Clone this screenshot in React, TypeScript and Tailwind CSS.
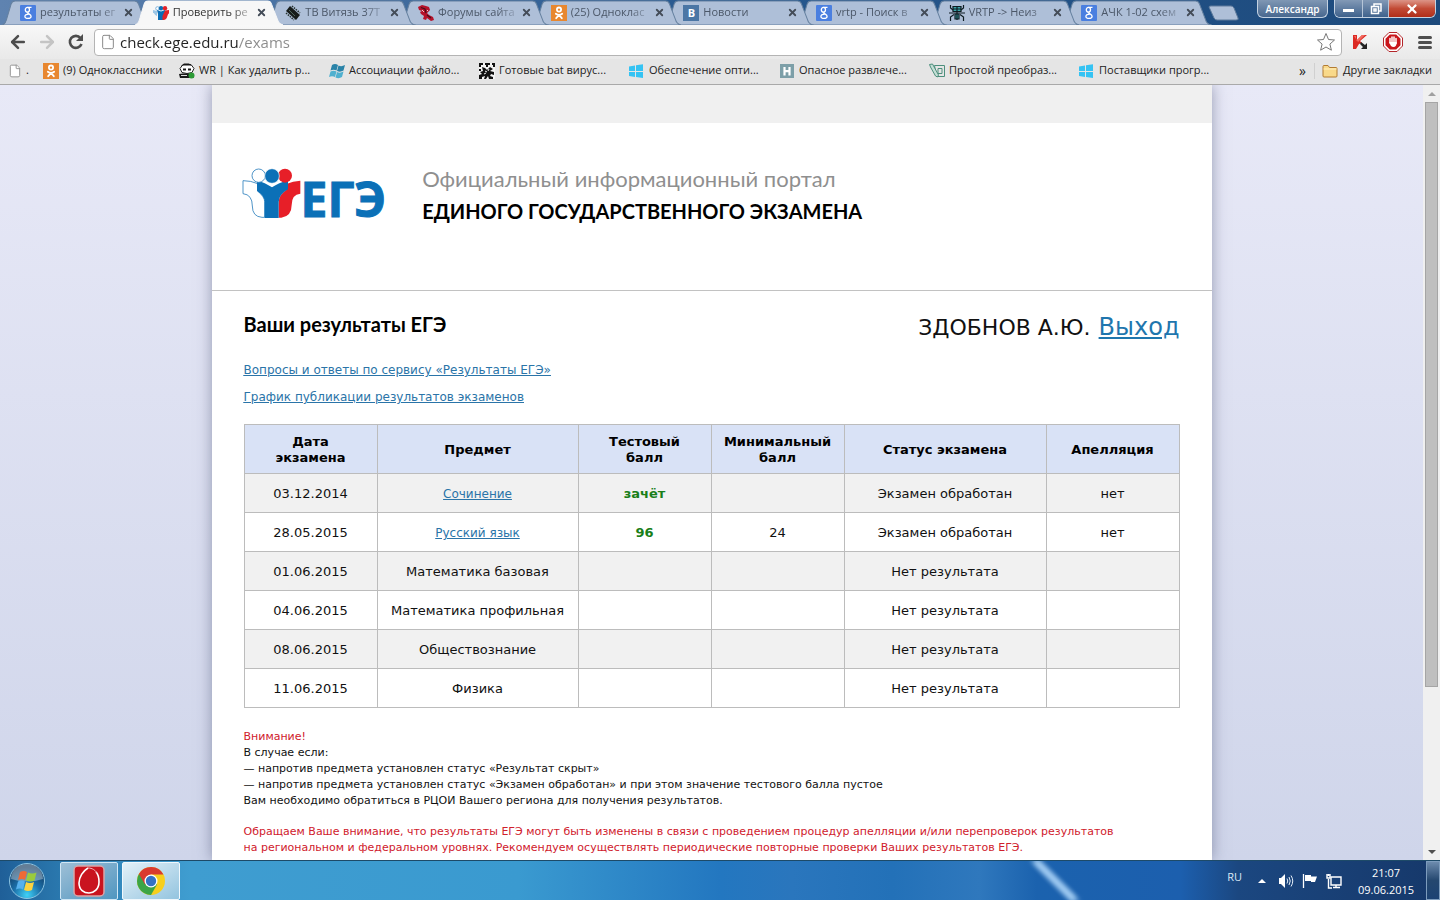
import type { ReactNode } from 'react';
import { ArrowLeft, ArrowRight, File, Star, X } from 'lucide-react';

const GoogleIcon = () => (
  <svg viewBox="0 0 16 16" className="size-4 shrink-0">
    <rect width="16" height="16" rx="1" fill="#4a7fe0" />
    <g fill="none" stroke="#fff" strokeWidth="1.3">
      <ellipse cx="7.4" cy="4.8" rx="2.1" ry="2.4" />
      <path d="M11.500 2.300H7.500M8.500 7.200c-2.600 1.200 2.600 1.800 2.600 4 0 2.900-6.200 2.900-6.200.4 0-1.700 2-2.400 4-2.400" />
    </g>
  </svg>
);

const OkIcon = () => (
  <svg viewBox="0 0 16 16" className="size-4 shrink-0">
    <rect width="16" height="16" fill="#e8872f" />
    <g fill="none" stroke="#fff" strokeWidth="1.8" strokeLinecap="round">
      <circle cx="8" cy="4.600" r="2.100" />
      <path d="M4.800 8.700c2 1.500 4.400 1.500 6.400 0M8 10l-2.800 3.200M8 10l2.800 3.200" />
    </g>
  </svg>
);

const PeopleIcon = () => (
  <svg viewBox="0 0 16 16" className="size-4 shrink-0">
    <circle cx="4.500" cy="3.500" r="1.800" fill="#fff" stroke="#7fb3dc" />
    <circle cx="8" cy="3.200" r="2.200" fill="#0b6db5" />
    <circle cx="12" cy="3.200" r="2.200" fill="#e42228" />
    <path d="M0 5l4 1v5C1 10 2 8 0 8z" fill="#9cc6e6" />
    <path d="M4 5l4 1.500L12 5v4l-2 2v4H5V9z" fill="#0b6db5" />
    <path d="M12 5.500L16 5v3.500c-2 0-1 6-5 6.500H9.500v-4z" fill="#e42228" />
  </svg>
);

const ChipIcon = () => (
  <svg viewBox="0 0 16 16" className="size-4 shrink-0">
    <path d="M5 1l10 9-4 5L1 6z" fill="#171c1a" />
    <path d="M1 8l8 7M7 1l8 7" stroke="#26322e" strokeWidth="1.500" strokeDasharray="1.500 1" />
    <path d="M4 5l6 6" stroke="#4d6259" />
  </svg>
);

const RedBirdIcon = () => (
  <svg viewBox="0 0 16 16" className="size-4 shrink-0">
    <path d="M0 2l4-2 4 1 3 1 1 3-3 3 2 2 4 2 1 3-3 1-4-3-1 2-3-1 1-3-3-2-1-2 2-1-3-1z" fill="#b5122b" />
    <path d="M3 2.500l4 1.500 1 4M9 10l4 3" stroke="#45101c" strokeWidth="1.200" fill="none" />
    <path d="M4 5l2 2M9 5l1 1" stroke="#f3c5c9" />
  </svg>
);

const VkIcon = () => (
  <span className="flex size-4 shrink-0 items-center justify-center bg-[#4b76a5] font-['Open_Sans',sans-serif] text-[11px] font-bold leading-none text-white">
    В
  </span>
);

const BugIcon = () => (
  <svg viewBox="0 0 16 16" className="size-4 shrink-0" fill="none" stroke="#0e1c22" strokeWidth="1.200">
    <path d="M4 1.500h8v5H4z" fill="#3aa5a8" />
    <path d="M6 9h4v5H6z" fill="#3aa5a8" />
    <path d="M1.500 0v3L4 5M14.500 0v3L12 5M0 8h16M1.500 16v-4L5 9.500M14.500 16v-4L11 9.500M8 1v14M4 4h8" />
  </svg>
);

const PandaIcon = () => (
  <svg viewBox="0 0 16 16" className="size-4 shrink-0">
    <path d="M1 5.500l3-4h8l3 4-2 4-5 1-5-1z" fill="#fff" stroke="#222" />
    <path d="M2 3l3-2.500h5L13 3l-2-.5H5zM4 5.500h3v2H4zM9 5.500h3v2H9zM0 11l4-.5h8l3 4.500H1z" fill="#1a1a1a" />
    <path d="M2 12.500h6" stroke="#ddd" />
    <circle cx="12.500" cy="12.500" r="3" fill="#2b9b35" />
  </svg>
);

const WinFlagIcon = () => (
  <svg viewBox="0 0 16 16" className="size-4 shrink-0">
    <path d="M3 2q3-2 6 0L7.500 7.500q-3-1.500-6 0zM9.500 2.500q3 1.500 6.500-.5l-1.500 5.500q-3 2-6.500.5z" fill="#2a83a8" />
    <path d="M1.500 8.500q3-1.500 6 0L6 14q-3-1.500-6 0zM8 9q3 1.500 6.500-.5L13 14q-3 2-6.500.5z" fill="#4fb0cf" />
  </svg>
);

const QrIcon = () => (
  <svg viewBox="0 0 16 16" className="size-4 shrink-0">
    <rect width="16" height="16" fill="#f4f4f4" />
    <path
      d="M0 0h4v2H2v2H0zM6 0h5v2H9v2H7V2H6zM13 0h3v4h-2V2h-1zM3 4l3 1 2 2 3-3 3 2-3 2 4 1v3l-3-1-1 2 3 1v2h-4l-1-3-2 3H5l1-3-3 1v2H0v-4l3-1-2-2 3-1zM0 6h2v2H0z"
      fill="#111"
    />
    <path d="M6 8l2 1M10 6l-1 2M5 11l2-1" stroke="#f4f4f4" />
  </svg>
);

const WindowsIcon = () => (
  <svg viewBox="0 0 16 16" className="size-4 shrink-0">
    <path d="M0 3.500l6-1V8H0zM7 2.300L14 1.300V8H7zM0 9h6v5l-6-1zM7 9h7v6l-7-1z" fill="#35c3f3" />
  </svg>
);

const HIcon = () => (
  <svg viewBox="0 0 16 16" className="size-4 shrink-0">
    <rect x="1" y="1" width="14" height="14" fill="#7d9fa8" />
    <path d="M5.500 4v8.500M10.500 4v8.500M5.500 8.200h5" stroke="#fff" strokeWidth="2.200" />
  </svg>
);

const NoteIcon = () => (
  <svg viewBox="0 0 16 16" className="size-4 shrink-0" fill="none" stroke="#4c8f7c">
    <path d="M5.500 2.500h10v11H7.500zM9 5.500h4v5H9z" />
    <path d="M.5 1.500l3-.5 6 11-1 2-2-1-5-9z" fill="#c4ded5" />
  </svg>
);

const FolderIcon = () => (
  <svg viewBox="0 0 16 16" className="size-4 shrink-0">
    <path d="M1 3.500q0-1 1-1h4l1.500 2H14q1 0 1 1V13q0 1-1 1H2q-1 0-1-1z" fill="#f9d98a" stroke="#b27b33" />
    <path d="M1.500 6h13" stroke="#fff0bd" />
  </svg>
);

const tabs = [
  { title: 'результаты ег', icon: <GoogleIcon /> },
  { title: 'Проверить ре', icon: <PeopleIcon />, active: true },
  { title: 'ТВ Витязь 37Т', icon: <ChipIcon /> },
  { title: 'Форумы сайта', icon: <RedBirdIcon /> },
  { title: '(25) Одноклас', icon: <OkIcon /> },
  { title: 'Новости', icon: <VkIcon /> },
  { title: 'vrtp - Поиск в', icon: <GoogleIcon /> },
  { title: 'VRTP -> Неиз', icon: <BugIcon /> },
  { title: 'АЧК 1-02 схем', icon: <GoogleIcon /> },
];

const bookmarks = [
  { title: 'WR | Как удалить р...', icon: <PandaIcon /> },
  { title: 'Ассоциации файло...', icon: <WinFlagIcon /> },
  { title: 'Готовые bat вирус...', icon: <QrIcon /> },
  { title: 'Обеспечение опти...', icon: <WindowsIcon /> },
  { title: 'Опасное развлече...', icon: <HIcon /> },
  { title: 'Простой преобраз...', icon: <NoteIcon /> },
  { title: 'Поставщики прогр...', icon: <WindowsIcon /> },
];

const exams = [
  { date: '03.12.2014', subject: 'Сочинение', link: true, score: 'зачёт', min: '', status: 'Экзамен обработан', appeal: 'нет' },
  { date: '28.05.2015', subject: 'Русский язык', link: true, score: '96', min: '24', status: 'Экзамен обработан', appeal: 'нет' },
  { date: '01.06.2015', subject: 'Математика базовая', score: '', min: '', status: 'Нет результата', appeal: '' },
  { date: '04.06.2015', subject: 'Математика профильная', score: '', min: '', status: 'Нет результата', appeal: '' },
  { date: '08.06.2015', subject: 'Обществознание', score: '', min: '', status: 'Нет результата', appeal: '' },
  { date: '11.06.2015', subject: 'Физика', score: '', min: '', status: 'Нет результата', appeal: '' },
];

function Tab({ title, icon, active, order }: { title: string; icon: ReactNode; active?: boolean; order: number }) {
  return (
    <div className="relative flex h-[25px] items-center pl-[10px]" style={{ zIndex: active ? 20 : order }}>
      {/* slanted tab outline, overlaps the neighbours */}
      <svg viewBox="0 0 147 24" preserveAspectRatio="none" className="absolute inset-y-0 -left-2 h-full w-[calc(100%+16px)]">
        <path
          d="M0 24C4 23 4 20 5 17L9 4Q10 1 13 1H131Q134 1 135 4L141 19Q142 23 147 24Z"
          fill={active ? '#f7f7f7' : '#aebfd8'}
          stroke={active ? '#f7f7f7' : '#65809f'}
        />
      </svg>
      <button className="relative flex min-w-0 flex-1 items-center gap-1 text-left">
        {icon}
        <span
          className={`flex-1 whitespace-nowrap [mask-image:linear-gradient(to_right,#000_75%,#0003)] ${
            active ? 'text-[#333]' : 'text-[#4b5768]'
          }`}
        >
          {title}
        </span>
      </button>
      <button aria-label="Закрыть вкладку" className="relative mr-1 flex size-5 shrink-0 items-center justify-center text-[#444c58]">
        <X className="size-[11px]" strokeWidth={4} />
      </button>
    </div>
  );
}

function TabStrip() {
  return (
    <div className="flex h-[25px] items-start bg-linear-to-r from-[#5f83b0] via-[#26588f] to-[#1d4a7c] pl-[10px] font-['Open_Sans','Noto_Sans',sans-serif] text-[11px]">
      <div className="grid min-w-0 flex-1 grid-cols-9">
        {tabs.map((tab, i) => (
          <Tab key={tab.title} {...tab} order={tabs.length - i} />
        ))}
      </div>
      <div className="flex w-[236px] shrink-0 items-start justify-between pl-1">
        <button aria-label="Новая вкладка" className="mt-[5px]">
          <svg viewBox="0 0 32 16" className="h-4 w-8">
            <path d="M1 2Q1 1 3 1H23Q25 1 26 3L30 13Q31 15 28 15H9Q7 15 6 13Z" fill="#aebfd8" stroke="#5e7b9c" />
          </svg>
        </button>
        <div className="flex gap-[6px] pr-1">
          <button className="h-[18px] w-[71px] rounded-b-md border border-t-0 border-[#c4d2e2] bg-linear-to-b from-[#7f97b4] to-[#48688f] text-[10px] font-semibold leading-4 text-white">
            Александр
          </button>
          <div className="flex h-[18px] overflow-hidden rounded-b-md border border-t-0 border-[#c4d2e2]">
            <button aria-label="Свернуть" className="flex w-7 items-end justify-center border-r border-[#b5c5d8] bg-linear-to-b from-[#8299b6] to-[#3f628c] pb-[5px]">
              <span className="h-[3px] w-[11px] bg-white" />
            </button>
            <button aria-label="Восстановить" className="flex w-[26px] items-center justify-center border-r border-[#b5c5d8] bg-linear-to-b from-[#8299b6] to-[#3f628c]">
              <svg viewBox="0 0 12 12" className="size-3" fill="none" stroke="#fff" strokeWidth="1.500">
                <path d="M4 3V1h7v7H9" />
                <path d="M1.500 3.500h7v7h-7zM4 6h2v2H4z" />
              </svg>
            </button>
            <button aria-label="Закрыть" className="flex w-[46px] items-center justify-center bg-linear-to-b from-[#dc9487] via-[#c24a35] to-[#b02d18] text-white">
              <X className="size-[14px]" strokeWidth={4} />
            </button>
          </div>
        </div>
      </div>
    </div>
  );
}

function Toolbar() {
  return (
    <div className="flex h-[34px] items-center bg-linear-to-b from-[#f8f8f8] to-[#e9e9e9] pl-2 pr-2">
      <div className="flex items-center gap-[9px] pr-2 text-[#4d4d4d]">
        <button aria-label="Назад">
          <ArrowLeft className="size-5" strokeWidth={3} />
        </button>
        <button aria-label="Вперёд" className="text-[#c4c4c4]">
          <ArrowRight className="size-5" strokeWidth={3} />
        </button>
        <button aria-label="Обновить">
          <svg viewBox="0 0 20 20" className="size-5">
            <path d="M14.500 6A6 6 0 1 0 15.500 12" fill="none" stroke="currentColor" strokeWidth="2.600" />
            <path d="M17 2v7h-7z" fill="currentColor" />
          </svg>
        </button>
      </div>
      <div className="flex h-[27px] flex-1 items-center rounded-sm border border-[#b4b4b4] bg-white px-[5px]">
        <File className="size-4 text-[#8a8a8a]" strokeWidth={1.5} />
        <input
          aria-label="Адрес"
          defaultValue="check.ege.edu.ru/exams"
          className="ml-1 min-w-0 flex-1 bg-[linear-gradient(to_right,#222_118px,#8a8a8a_118px)] bg-clip-text font-['Open_Sans','Noto_Sans',sans-serif] text-[15px] leading-6 text-transparent outline-none"
        />
        <button aria-label="Добавить в закладки" className="pl-1">
          <svg viewBox="0 0 20 20" className="size-5">
            <path
              d="M10 1.500l2.500 6 6 .5-4.600 4.100 1.500 6.100L10 15l-5.400 3.200 1.500-6.100L1.500 8l6-.5z"
              fill="#fff"
              stroke="#777"
              strokeLinejoin="round"
            />
          </svg>
        </button>
      </div>
      <div className="flex items-center gap-[15px] pl-[10px]">
        <button aria-label="Антивирус">
          <svg viewBox="0 0 16 16" className="size-4">
            <path d="M1 1h4v5l5-5h5L8 7l2 2-3 1-3 5H1z" fill="#dc2a24" />
            <path d="M2 2h2v5l6-6h3L6 8z" fill="#f26a5e" />
            <path d="M9 8l4 3 2-2v6H9l2-2-3-3z" fill="#222" />
          </svg>
        </button>
        <button aria-label="Блокировка рекламы">
          <svg viewBox="0 0 20 20" className="size-5">
            <path d="M6 .5h8L19.500 6v8L14 19.500H6L.5 14V6z" fill="#fff" stroke="#b3262a" />
            <path d="M6.800 2.500h6.400l4.300 4.300v6.400l-4.300 4.300H6.800l-4.300-4.300V6.800z" fill="#c9151b" />
            <path d="M7 6.500v4.500M9 5v6M11 5v6M13 6.500v5" stroke="#fff" strokeWidth="1.500" strokeLinecap="round" />
            <path d="M6.300 10h7.400q0 5-3.200 5T6.300 10z" fill="#fff" />
          </svg>
        </button>
        <button aria-label="Меню" className="flex w-[14px] flex-col gap-[2px]">
          <span className="h-[3px] rounded-xs bg-[#4f4f4f]" />
          <span className="h-[3px] rounded-xs bg-[#4f4f4f]" />
          <span className="h-[3px] rounded-xs bg-[#4f4f4f]" />
        </button>
      </div>
    </div>
  );
}

function BookmarksBar() {
  return (
    <nav className="flex h-[26px] items-center whitespace-nowrap border-b border-[#a9a9a9] bg-[#e5e5e5] pb-[2px] pl-2 pr-2 font-['Open_Sans','Noto_Sans',sans-serif] text-[11px] text-[#222]">
      <a href="#" className="flex w-[35px] shrink-0 items-center gap-1">
        <File className="size-[14px] fill-white text-[#8a8a8a]" strokeWidth={1.5} />.
      </a>
      <a href="#" className="flex w-[136px] shrink-0 items-center gap-1">
        <OkIcon />
        (9) Одноклассники
      </a>
      <div className="flex min-w-0 flex-1 overflow-hidden">
        {bookmarks.map((b) => (
          <a key={b.title} href="#" className="flex w-[150px] shrink-0 items-center gap-1">
            {b.icon}
            {b.title}
          </a>
        ))}
      </div>
      <button aria-label="Ещё закладки" className="border-r border-[#d0d0d0] pr-2 text-sm leading-4">
        »
      </button>
      <a href="#" className="flex items-center gap-[5px] pl-[7px]">
        <FolderIcon />
        Другие закладки
      </a>
    </nav>
  );
}

function Logo() {
  return (
    <a href="#" aria-label="ЕГЭ" className="flex items-start">
      <svg viewBox="94 80 177 156" className="h-[52px] w-[59px]">
        <path
          d="M97 121q24 0 44 9v22q21 18 21 32v47h-8q-29-2-29-34 0-34-28-37z"
          fill="#fff"
          stroke="#2d7fbd"
          strokeWidth="2.500"
        />
        <path d="M269 121q-22 1-42 10v18q-23 14-23 36v47h8q31-4 31-38 0-32 26-34z" fill="#e71f28" />
        <path d="M139 121q24 5 45 20 20-15 48-20v26q-28 16-28 38v48h-42v-49q0-17-23-32z" fill="#0b70b7" />
        <circle cx="144" cy="106" r="20" fill="#fff" stroke="#2d7fbd" strokeWidth="2.500" />
        <circle cx="223" cy="106" r="21" fill="#e71f28" />
        <circle cx="184" cy="107" r="22" fill="#0b70b7" stroke="#fff" strokeWidth="2" />
      </svg>
      <span className="pt-[6px] font-['Open_Sans',sans-serif] text-5xl font-bold leading-[52px] text-[#0b70b7] [-webkit-text-stroke:1px_#0b70b7]">
        ЕГЭ
      </span>
    </a>
  );
}

function Results() {
  return (
    <div className="px-8 pt-5 font-['DejaVu_Sans',sans-serif] text-[#111]">
      <div className="flex items-start justify-between">
        <h1 className="font-['Lato','Open_Sans',sans-serif] text-xl font-bold leading-[26px] text-black">Ваши результаты ЕГЭ</h1>
        <div className="flex items-baseline gap-2 text-[22px] leading-8">
          <span>ЗДОБНОВ А.Ю.</span>
          <a href="#" className="text-2xl leading-8 text-[#1f76ae] underline">
            Выход
          </a>
        </div>
      </div>
      <div className="flex flex-col items-start gap-[11px] pt-[18px] text-xs text-[#2a74a8] underline">
        <a href="#">Вопросы и ответы по сервису «Результаты ЕГЭ»</a>
        <a href="#">График публикации результатов экзаменов</a>
      </div>

      <table className="mt-[19px] w-full table-fixed border-collapse text-center text-[13px] leading-4 [&_td]:border [&_td]:border-[#bcbcbc] [&_td]:pt-[2px] [&_th]:border [&_th]:border-[#bcbcbc] [&_th]:pt-[2px]">
        <colgroup>
          <col className="w-[133px]" />
          <col className="w-[201px]" />
          <col className="w-[133px]" />
          <col className="w-[133px]" />
          <col className="w-[202px]" />
          <col className="w-[133px]" />
        </colgroup>
        <thead>
          <tr className="h-[49px] bg-[#d9e2f6] text-black">
            <th className="px-4">Дата экзамена</th>
            <th>Предмет</th>
            <th className="px-4">Тестовый балл</th>
            <th>Минимальный балл</th>
            <th>Статус экзамена</th>
            <th>Апелляция</th>
          </tr>
        </thead>
        <tbody>
          {exams.map((exam) => (
            <tr key={exam.date} className="h-[39px] odd:bg-[#f1f1f1]">
              <td>{exam.date}</td>
              <td>
                {exam.link ? (
                  <a href="#" className="text-xs leading-4 text-[#2a74a8] underline">
                    {exam.subject}
                  </a>
                ) : (
                  exam.subject
                )}
              </td>
              <td className="font-bold text-[#1a7f1a]">{exam.score}</td>
              <td>{exam.min}</td>
              <td>{exam.status}</td>
              <td>{exam.appeal}</td>
            </tr>
          ))}
        </tbody>
      </table>

      <div className="pt-[21px] text-[11px] leading-4">
        <p className="text-[#d0202c]">Внимание!</p>
        <p>В случае если:</p>
        <p>— напротив предмета установлен статус «Результат скрыт»</p>
        <p>— напротив предмета установлен статус «Экзамен обработан» и при этом значение тестового балла пустое</p>
        <p>Вам необходимо обратиться в РЦОИ Вашего региона для получения результатов.</p>
        <p className="pt-[15px] text-[#d0202c]">
          Обращаем Ваше внимание, что результаты ЕГЭ могут быть изменены в связи с проведением процедур апелляции и/или перепроверок результатов
          <br />
          на региональном и федеральном уровнях. Рекомендуем осуществлять периодические повторные проверки Ваших результатов ЕГЭ.
        </p>
      </div>
    </div>
  );
}

function Scrollbar() {
  return (
    <div className="flex w-[17px] shrink-0 flex-col items-center bg-[#f0f0f0]">
      <span className="flex h-[17px] items-center">
        <svg viewBox="0 0 8 4" className="h-1 w-2">
          <path d="M0 4l4-4 4 4z" fill="#a0a0a0" />
        </svg>
      </span>
      <div className="w-full flex-1 px-[2px]">
        <div className="h-[79%] border border-[#a5a5a5] bg-[#bfbfbf]" />
      </div>
      <span className="flex h-[17px] items-center">
        <svg viewBox="0 0 8 4" className="h-1 w-2">
          <path d="M0 0l4 4 4-4z" fill="#505050" />
        </svg>
      </span>
    </div>
  );
}

function Taskbar() {
  return (
    <footer className="relative flex h-10 shrink-0 items-center justify-between overflow-hidden border-t border-[#1d4a68] bg-[linear-gradient(to_right,#1f5f98_0,#2a78ae_60px,#3f9dd0_190px,#3a9ad0_36%,#2377c0_50%,#2a76bd_55%,#2371b8_62%,#2f78bd_68%,#1b62ae_72%,#1c5fae_82%,#1b4780_86%,#16386a_100%)] font-['Open_Sans','Noto_Sans',sans-serif] text-[11px] text-white">
      {/* light streak of the desktop behind the glass */}
      <div className="absolute inset-y-0 left-[73%] w-2 rotate-[-45deg] scale-y-150 bg-[#9cc8f0] blur-[2px]" />
      <div className="relative flex h-full items-center gap-1 pl-2">
        <button aria-label="Пуск" className="mr-[10px]">
          <svg viewBox="0 0 38 38" className="size-[38px]">
            <defs>
              <radialGradient id="orb" cx="50%" cy="90%" r="80%">
                <stop offset="0" stopColor="#3fd2f7" />
                <stop offset=".5" stopColor="#1b6ea8" />
                <stop offset="1" stopColor="#12395f" />
              </radialGradient>
            </defs>
            <circle cx="19" cy="19" r="17.500" fill="url(#orb)" stroke="#8cc4e2" />
            <path d="M3 17a16 15 0 0 1 32 0q-16 5-32 0z" fill="#fff" opacity=".35" />
            <path d="M12 10q4-2 7 0l-2 8q-3-2-7 0z" fill="#ee6a35" />
            <path d="M20 10.500q4 2 8.500 0l-2 8q-4 2-8.500 0z" fill="#9acb3e" />
            <path d="M10 19.500q3.500-2 7 0l-2 8q-3-2-7 0z" fill="#56b1ee" />
            <path d="M18 20q4 2 8 0l-2 8q-4 2-8 0z" fill="#fbd340" />
          </svg>
        </button>
        <button aria-label="Программа" className="flex h-[38px] w-[58px] items-center justify-center rounded-xs border border-[#cfe6f5] bg-linear-to-br from-[#9dbfd6] to-[#4f96c0]">
          <svg viewBox="0 0 32 32" className="size-8">
            <rect x="1" y="1" width="30" height="30" rx="4" fill="#c9141f" stroke="#d9a5a8" strokeWidth="1.500" />
            <path d="M15 3c-5 3-9 9-9 15 0 7 5 10 10 10s10-4 10-11c0-5-1-8-3-10" fill="none" stroke="#fff" strokeWidth="1.600" />
            <path d="M15 3c4 0 8 2 9 6" fill="none" stroke="#f3b9bc" />
          </svg>
        </button>
        <button aria-label="Google Chrome" className="flex h-[38px] w-[58px] items-center justify-center rounded-xs border border-[#f0f8fd] bg-linear-to-br from-[#e4f1f8] to-[#93c4df]">
          <svg viewBox="0 0 30 30" className="size-[30px]">
            <circle cx="15" cy="15" r="14" fill="#f7cf1d" />
            <path d="M15 15L2.900 8A14 14 0 0 0 15 29l6-10.500z" fill="#3ba547" />
            <path d="M2.900 8a14 14 0 0 1 24.600.5L15 8.500 9 18.500z" fill="#d93a2e" />
            <circle cx="15" cy="15" r="6.500" fill="#fff" />
            <circle cx="15" cy="15" r="5.200" fill="#3572c4" />
          </svg>
        </button>
      </div>
      <div className="relative flex h-full items-center">
        <span className="pb-[6px] text-[#dbe8f5]">RU</span>
        <div className="flex items-center gap-2 pl-4 pr-4">
          <svg viewBox="0 0 8 4" className="h-1 w-2">
            <path d="M0 4l4-4 4 4z" fill="#fff" />
          </svg>
          <svg viewBox="0 0 16 16" className="ml-1 size-4">
            <path d="M1 5h2l4-4v14l-4-4H1z" fill="#fff" />
            <path d="M9 5.500q1.500 2.500 0 5M11 4q2.500 4 0 8M13 2.500q3.500 5.500 0 11" fill="none" stroke="#e4eef8" />
          </svg>
          <svg viewBox="0 0 16 16" className="size-4">
            <path d="M1.500 1v14" stroke="#fff" strokeWidth="1.300" />
            <path d="M3 2h6v1.500h6L13 9H9V8H3z" fill="#fff" />
          </svg>
          <svg viewBox="0 0 16 16" className="size-4" fill="none" stroke="#fff" strokeWidth="1.400">
            <path d="M5 4h10v8H5zM7 14.500h7M10 12v2M2.500 6v9H6" />
            <path d="M1 1v4h3V1M2.500 3V1" />
          </svg>
        </div>
        <time className="w-14 text-center leading-[17px]">
          21:07
          <br />
          09.06.2015
        </time>
        <button aria-label="Показать рабочий стол" className="ml-3 h-full w-[14px] border border-[#7d9cbd] bg-linear-to-b from-[#6d8bad] via-[#24476f] to-[#1c4273]" />
      </div>
    </footer>
  );
}

export default function App() {
  return (
    <div className="flex h-screen flex-col overflow-hidden">
      <header className="shrink-0">
        <TabStrip />
        <Toolbar />
        <BookmarksBar />
      </header>
      <div className="flex min-h-0 flex-1">
        <main className="flex min-w-0 flex-1 justify-center overflow-hidden bg-linear-to-b from-[#e8e9f7] to-[#cfd5ea]">
          <div className="w-full max-w-[1000px] bg-white shadow-[0_0_14px_rgba(70,75,110,0.5)]">
            <div className="h-[38px] bg-[#f0f0f0]" />
            <div className="flex h-[168px] items-start gap-9 border-b border-[#c2c2c2] px-[30px] pt-11">
              <Logo />
              <div className="-mt-1 font-['Lato','Open_Sans',sans-serif] text-[22px] leading-8">
                <p className="text-[#8f8f8f]">Официальный информационный портал</p>
                <p className="text-xl font-bold leading-8 text-black">ЕДИНОГО ГОСУДАРСТВЕННОГО ЭКЗАМЕНА</p>
              </div>
            </div>
            <Results />
          </div>
        </main>
        <Scrollbar />
      </div>
      <Taskbar />
    </div>
  );
}
